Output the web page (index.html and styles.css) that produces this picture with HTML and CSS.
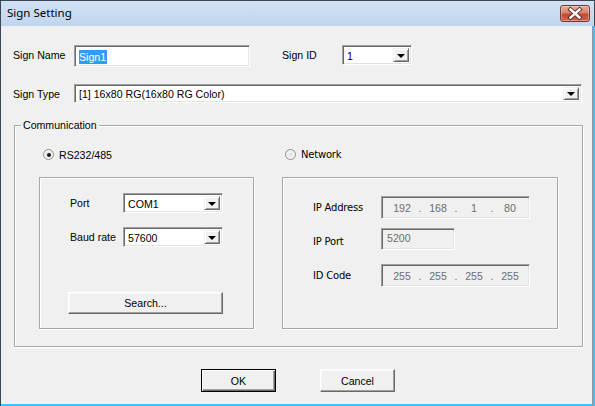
FILE: index.html
```html
<!DOCTYPE html>
<html>
<head>
<meta charset="utf-8">
<link rel="stylesheet" href="styles.css">
</head>
<body>
<div class="window">
  <div class="titlebar">
    <span class="title">Sign Setting</span>
    <div class="close">
      <svg width="30" height="17" viewBox="0 0 30 17">
        <path d="M10.5 4.5 L19.5 12.5 M19.5 4.5 L10.5 12.5" stroke="#5a2a24" stroke-width="4.2" stroke-linecap="square"/>
        <path d="M10.5 4.5 L19.5 12.5 M19.5 4.5 L10.5 12.5" stroke="#ffffff" stroke-width="2.4" stroke-linecap="square"/>
      </svg>
    </div>
  </div>
  <div class="content">
    <div class="row row1">
      <span class="lbl lbl-main">Sign Name</span>
      <div class="edit name"><span class="selected">Sign1</span></div>
      <span class="lbl lbl-id">Sign ID</span>
      <div class="combo combo-id"><span class="val">1</span><span class="drop"><span class="tri"></span></span></div>
    </div>
    <div class="row row2">
      <span class="lbl lbl-main">Sign Type</span>
      <div class="combo combo-type"><span class="val">[1] 16x80 RG(16x80 RG Color)</span><span class="drop"><span class="tri"></span></span></div>
    </div>
    <fieldset class="group">
      <legend>Communication</legend>
      <div class="cols">
        <div class="col col-left">
          <div class="radio-row"><span class="radio checked"></span><span>RS232/485</span></div>
          <div class="panel panel-left">
            <div class="prow">
              <span class="plbl">Port</span>
              <div class="combo combo-small"><span class="val">COM1</span><span class="drop"><span class="tri"></span></span></div>
            </div>
            <div class="prow prow2">
              <span class="plbl">Baud rate</span>
              <div class="combo combo-small"><span class="val">57600</span><span class="drop"><span class="tri"></span></span></div>
            </div>
            <button class="btn search">Search...</button>
          </div>
        </div>
        <div class="col col-right">
          <div class="radio-row radio-net"><span class="radio"></span><span class="ms">Network</span></div>
          <div class="panel panel-right">
            <div class="nrow">
              <span class="nlbl">IP Address</span>
              <div class="edit ip disabled">
                <span class="seg">192</span><span class="dot">.</span><span class="seg">168</span><span class="dot">.</span><span class="seg">1</span><span class="dot">.</span><span class="seg">80</span>
              </div>
            </div>
            <div class="nrow nrow2">
              <span class="nlbl">IP Port</span>
              <div class="edit port disabled"><span>5200</span></div>
            </div>
            <div class="nrow nrow3">
              <span class="nlbl">ID Code</span>
              <div class="edit ip disabled">
                <span class="seg">255</span><span class="dot">.</span><span class="seg">255</span><span class="dot">.</span><span class="seg">255</span><span class="dot">.</span><span class="seg">255</span>
              </div>
            </div>
          </div>
        </div>
      </div>
    </fieldset>
    <div class="buttons">
      <button class="btn dlg default">OK</button>
      <button class="btn dlg">Cancel</button>
    </div>
  </div>
</div>
</body>
</html>
```

FILE: styles.css
```css
* { box-sizing: border-box; }
html, body { margin: 0; padding: 0; background: #f0f0f0; }
body { font-family: "Liberation Sans", Arial, sans-serif; font-size: 10.6px; color: #000; }

.window {
  width: 595px;
  height: 406px;
  background: #f0f0f0;
  display: flex;
  flex-direction: column;
  box-shadow: inset 1px 0 0 #3a4654, inset -2px 0 0 #40c4ec, inset -3px 0 0 #8a9aa8, inset 0 -2px 0 #40c4ec;
  overflow: hidden;
}

.titlebar {
  height: 26px;
  flex: none;
  display: flex;
  align-items: flex-start;
  justify-content: space-between;
  background: linear-gradient(#d2e2f5, #c0d5ee);
  border-top: 1px solid #3a4654;
  border-left: 1px solid #3a4654;
  border-right: 1px solid #3a4654;
  padding-left: 6px;
  padding-right: 4px;
}
.title {
  font-family: "Noto Sans", "Open Sans", sans-serif;
  font-size: 11.5px;
  line-height: 24px;
  color: #000;
}
.close {
  width: 30px;
  height: 17px;
  margin-top: 4px;
  border: 1px solid #6e3a33;
  border-radius: 3px;
  background: linear-gradient(#e8a898 0%, #d8826c 45%, #c24a30 55%, #d0644a 100%);
  box-shadow: inset 0 0 0 1px rgba(255,255,255,0.35);
  position: relative;
}
.close svg { position: absolute; left: -1px; top: -1px; }

.content { flex: 1; display: flex; flex-direction: column; }

.row { display: flex; align-items: flex-start; padding-left: 13px; }
.row1 { margin-top: 19px; height: 22px; }
.row2 { margin-top: 17px; height: 19px; }
.lbl { display: block; }
.lbl-main { width: 61px; line-height: 21px; }
.row2 .lbl-main { line-height: 20px; }
.lbl-id { width: 60px; margin-left: 32px; line-height: 21px; }

.edit {
  background: #fff;
  border: 1px solid;
  border-color: #a0a0a0 #fff #fff #a0a0a0;
  box-shadow: inset 1px 1px 0 #696969, inset -1px -1px 0 #e3e3e3;
}
.name { width: 176px; height: 22px; padding: 4px 0 0 4px; }
.selected { background: #3399ff; color: #fff; display: inline-block; line-height: 14px; padding: 0 1px 0 0; }

.combo {
  display: flex;
  background: #fff;
  border: 1px solid;
  border-color: #a0a0a0 #fff #fff #a0a0a0;
  box-shadow: inset 1px 1px 0 #696969, inset -1px -1px 0 #e3e3e3;
  padding: 2px;
}
.combo .val { flex: 1; padding-left: 2px; line-height: 16px; white-space: nowrap; overflow: hidden; }
.combo .drop {
  width: 16px;
  flex: none;
  background: #f0f0f0;
  border: 1px solid;
  border-color: #f0f0f0 #696969 #696969 #f0f0f0;
  box-shadow: inset 1px 1px 0 #fff, inset -1px -1px 0 #a0a0a0;
  display: flex;
  align-items: center;
  justify-content: center;
}
.tri {
  width: 0; height: 0;
  border-left: 4px solid transparent;
  border-right: 4px solid transparent;
  border-top: 4px solid #000;
  margin-top: 1px;
}
.combo-id { width: 70px; height: 20px; }
.combo-type { width: 508px; height: 19px; }
.combo-type .val { line-height: 15px; }
.combo-small { width: 100px; height: 20px; }

.group {
  margin: 15px 0 0 14px;
  width: 569px;
  border: 1px solid #a8a8a8;
  box-shadow: inset 1px 1px 0 #fff, 1px 1px 0 #fff;
  padding: 0 0 17px 0;
  min-width: 0;
}
.group legend {
  margin-left: 6px;
  padding: 0 2px;
  line-height: 14px;
}

.cols { display: grid; grid-template-columns: 215px 276px; column-gap: 28px; padding-left: 24px; }
.col { display: flex; flex-direction: column; }
.radio-row { display: flex; align-items: center; height: 13px; margin-top: 16px; padding-left: 4px; gap: 5px; }
.radio-net { padding-left: 3px; }
.radio {
  width: 11px; height: 11px; border-radius: 50%;
  border: 1px solid #8e8f8f;
  background: radial-gradient(circle at 50% 50%, #e2e2e2 0%, #f2f2f2 60%, #fff 100%);
  position: relative;
}
.radio.checked::after {
  content: "";
  position: absolute;
  left: 2.5px; top: 2.5px;
  width: 4px; height: 4px; border-radius: 50%;
  background: #1a1a1a;
}

.panel {
  margin-top: 16px;
  height: 152px;
  border: 1px solid #a8a8a8;
  box-shadow: inset 1px 1px 0 #fff, 1px 1px 0 #fff;
}
.panel-left { padding: 15px 0 0 30px; display: flex; flex-direction: column; align-items: flex-start; }
.prow { display: flex; align-items: center; }
.prow2 { margin-top: 14px; }
.plbl { width: 53px; }
.btn {
  font-family: "Liberation Sans", Arial, sans-serif;
  font-size: 10.6px;
  color: #000;
  background: #f0f0f0;
  border: 1px solid;
  border-color: #fff #696969 #696969 #fff;
  box-shadow: inset -1px -1px 0 #a0a0a0, inset 1px 1px 0 #f8f8f8;
  padding: 0;
}
.search { width: 155px; height: 22px; margin-top: 45px; margin-left: -2px; }

.panel-right { padding: 18px 0 0 30px; }
.nrow { display: flex; align-items: center; }
.nrow2 { margin-top: 9px; align-items: flex-start; }
.nrow3 { margin-top: 14px; }
.nlbl { width: 68px; font-family: "DejaVu Sans", sans-serif; font-size: 10px; letter-spacing: -0.2px; }
.nrow2 .nlbl { padding-top: 8px; }
.ms { font-family: "DejaVu Sans", sans-serif; font-size: 10px; letter-spacing: -0.2px; }
.disabled { background: #f0f0f0; color: #6d6d6d; }
.ip { width: 149px; height: 23px; display: flex; align-items: center; padding-left: 7px; }
.seg { width: 26px; text-align: center; }
.dot { width: 10px; text-align: center; }
.port { width: 74px; height: 22px; padding: 3px 0 0 5px; }

.buttons { display: flex; gap: 44px; margin-top: 22px; padding-left: 201px; }
.dlg { width: 75px; height: 23px; }
.default { border-color: #000; box-shadow: inset 1px 1px 0 #fff, inset -1px -1px 0 #696969, inset -2px -2px 0 #a0a0a0; }
```
